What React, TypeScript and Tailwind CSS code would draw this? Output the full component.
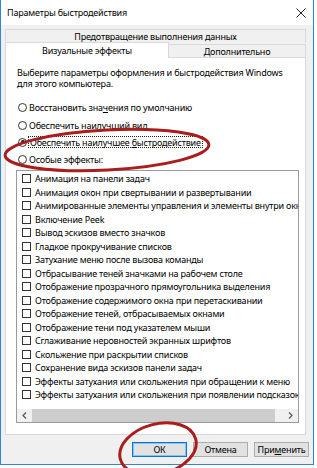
import React from "react";

const items = [
  "Анимация на панели задач",
  "Анимация окон при свертывании и развертывании",
  "Анимированные элементы управления и элементы внутри окна",
  "Включение Peek",
  "Вывод эскизов вместо значков",
  "Гладкое прокручивание списков",
  "Затухание меню после вызова команды",
  "Отбрасывание теней значками на рабочем столе",
  "Отображение прозрачного прямоугольника выделения",
  "Отображение содержимого окна при перетаскивании",
  "Отображение теней, отбрасываемых окнами",
  "Отображение тени под указателем мыши",
  "Сглаживание неровностей экранных шрифтов",
  "Скольжение при раскрытии списков",
  "Сохранение вида эскизов панели задач",
  "Эффекты затухания или скольжения при обращении к меню",
  "Эффекты затухания или скольжения при появлении подсказок",
];

function Radio({ checked }: { checked?: boolean }) {
  return (
    <span className="w-[9px] h-[9px] rounded-full border border-[#333333] bg-white flex items-center justify-center shrink-0">
      {checked && <span className="w-[4px] h-[4px] rounded-full bg-[#111111]" />}
    </span>
  );
}

function Checkbox() {
  return <span className="w-[9px] h-[9px] border border-[#333333] bg-white shrink-0" />;
}

export default function App() {
  return (
    <div
      className="relative w-[317px] h-[468px] bg-white overflow-hidden text-[#000000] tracking-[-0.2px]"
      style={{ fontFamily: '"Noto Sans", "Open Sans", sans-serif' }}
    >
      <div className="w-[314px] h-[465px] flex flex-col bg-[#f0f0f0] border-x border-b border-[#2b87d9]">
        {/* title bar */}
        <div className="h-[25px] bg-white flex items-center justify-between pl-[6px] pr-[7px] shrink-0">
          <span className="text-[9px] leading-none">Параметры быстродействия</span>
          <svg width="10" height="10" viewBox="0 0 10 10">
            <path d="M0.5 0.5 L9.5 9.5 M9.5 0.5 L0.5 9.5" stroke="#222" strokeWidth="1" fill="none" />
          </svg>
        </div>

        <div className="flex-1 flex flex-col pl-[4px] pr-[7px] pt-[4px] text-[9px] leading-none">
          {/* tabs */}
          <div className="h-[14px] border-x border-t border-[#d9d9d9] flex items-center justify-center">
            Предотвращение выполнения данных
          </div>
          <div className="h-[14px] flex items-end relative z-10">
            <div className="w-[164px] h-[16px] -mb-[1px] bg-white border-x border-t border-[#d9d9d9] flex items-center justify-center">
              Визуальные эффекты
            </div>
            <div className="flex-1 h-[13px] border-t border-r border-[#d9d9d9] flex items-center justify-center">
              Дополнительно
            </div>
          </div>

          {/* panel */}
          <div className="h-[378px] bg-white border border-[#d9d9d9] flex flex-col pl-[11px] pr-[6px]">
            <div className="pt-[10px] leading-[10.6px] whitespace-nowrap">
              <div>Выберите параметры оформления и быстродействия Windows</div>
              <div>для этого компьютера.</div>
            </div>

            <div className="mt-[10px] flex flex-col">
              <div className="h-[17.3px] flex items-center gap-[2px] ml-[1px]">
                <Radio />
                <span>
                  Восстановить зна<span className="underline">ч</span>ения по умолчанию
                </span>
              </div>
              <div className="h-[17.3px] flex items-center gap-[2px] ml-[1px]">
                <Radio />
                <span>Обеспечить наилучший вид</span>
              </div>
              <div className="h-[17.3px] flex items-center gap-[1px] ml-[1px]">
                <Radio checked />
                <span className="border border-dotted border-[#222] px-[1px] py-[0.5px]">
                  Обеспечить наилучшее <span className="underline">б</span>ыстродействие
                </span>
              </div>
              <div className="h-[17.3px] flex items-center gap-[2px] ml-[1px]">
                <Radio />
                <span>Особые эффекты:</span>
              </div>
            </div>

            {/* listbox */}
            <div className="mt-[1.5px] -ml-[1px] w-[283px] h-[253px] border border-[#9a9a9a] flex flex-col overflow-hidden">
              <div className="pt-[1px] flex flex-col">
                {items.map((t) => (
                  <div key={t} className="h-[13.5px] flex items-center pl-[5px] gap-[4px] whitespace-nowrap">
                    <Checkbox />
                    <span>{t}</span>
                  </div>
                ))}
              </div>
              <div className="flex-1" />
              <div className="h-[13px] bg-[#f0f0f0] flex items-center">
                <div className="w-[15px] h-full flex items-center justify-center">
                  <svg width="5" height="7" viewBox="0 0 5 7">
                    <path d="M4 0.5 L1 3.5 L4 6.5" stroke="#555" strokeWidth="1.2" fill="none" />
                  </svg>
                </div>
                <div className="w-[243px] h-full bg-[#cdcdcd]" />
                <div className="flex-1 h-full flex items-center justify-end pr-[5px]">
                  <svg width="5" height="7" viewBox="0 0 5 7">
                    <path d="M1 0.5 L4 3.5 L1 6.5" stroke="#555" strokeWidth="1.2" fill="none" />
                  </svg>
                </div>
              </div>
            </div>
          </div>

          {/* buttons */}
          <div className="mt-[7px] -mr-[3px] flex justify-end gap-[6px]">
            <div className="w-[55px] h-[15px] bg-[#e1e1e1] border border-[#0078d7] shadow-[inset_0_0_0_1px_#8fc0ea] flex items-center justify-center">
              ОК
            </div>
            <div className="w-[55px] h-[15px] bg-[#e1e1e1] border border-[#adadad] flex items-center justify-center">
              Отмена
            </div>
            <div className="w-[55px] h-[15px] bg-[#e1e1e1] border border-[#adadad] flex items-center justify-center">
              <span>
                При<span className="underline">м</span>енить
              </span>
            </div>
          </div>
        </div>
      </div>

      {/* background fragment below window */}
      <div className="absolute left-[2px] top-[465px] text-[9px] leading-none text-[#333]">
        ссорусистем компьютеру
      </div>

      {/* red annotation ellipses */}
      <svg className="absolute left-0 top-0 pointer-events-none" width="317" height="468" viewBox="0 0 317 468">
        <ellipse cx="107" cy="150" rx="102" ry="20" transform="rotate(-3 107 150)" fill="none" stroke="#a91d1d" strokeWidth="3" />
        <ellipse cx="158" cy="449" rx="39" ry="25" transform="rotate(-15 158 449)" fill="none" stroke="#a91d1d" strokeWidth="3" />
      </svg>
    </div>
  );
}
